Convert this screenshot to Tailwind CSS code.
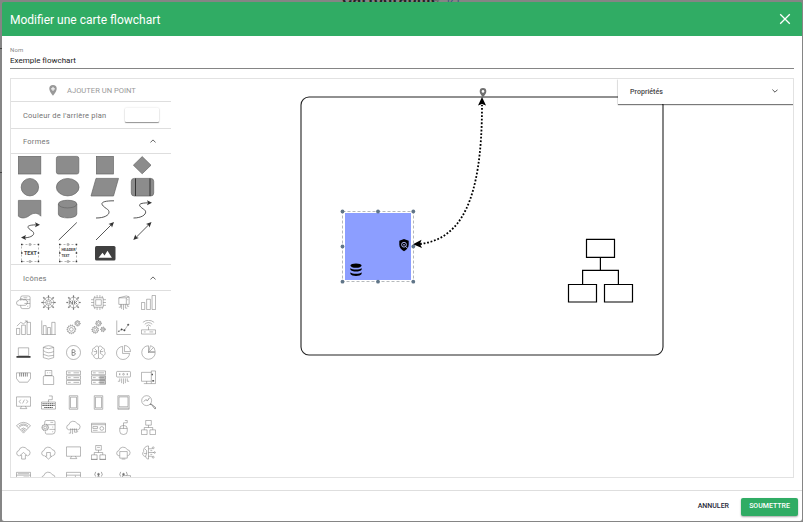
<!DOCTYPE html>
<html lang="fr">
<head>
<meta charset="utf-8">
<title>Modifier une carte flowchart</title>
<script src="https://cdn.jsdelivr.net/npm/@tailwindcss/browser@4"></script>
</head>
<body class="relative h-[522px] w-[803px] overflow-hidden bg-[#858585] font-['Roboto',sans-serif]">
<!-- page behind the dialog -->
<div class="absolute left-[342px] top-[-9px] flex items-center gap-[7px] text-[15.5px] leading-[17px] font-bold text-[#222]"><span class="tracking-[.6px]">Cartographie</span><span class="text-[11px] font-normal text-[#405580]">[Z]</span></div>
<div class="absolute left-0 top-[48px] h-px w-[2px] bg-[#444]"></div>
<div class="absolute left-0 top-[172px] h-px w-[2px] bg-[#444]"></div>

<div class="relative ml-[2px] flex h-[522px] w-[800px] flex-col pt-[2px] pb-px">
  <header class="flex h-[34px] shrink-0 items-center justify-between rounded-t-[2px] bg-[#30ac64] pl-2 pr-[11px] text-white">
    <h1 class="pt-px text-[12px] leading-4">Modifier une carte flowchart</h1>
    <svg class="size-3" viewBox="0 0 12 12" fill="none" stroke="white" stroke-width="1.3"><path d="M1.2 1.2 10.8 10.8M10.8 1.2 1.2 10.8"/></svg>
  </header>
  <main class="flex min-h-0 flex-1 flex-col bg-white px-2 pt-[10px]">
    <label class="text-[6px] leading-[8px] tracking-[.2px] text-[#888]">Nom</label>
    <div class="h-[15px] border-b border-[#858585] text-[8px] leading-[13px] text-[#222]">Exemple flowchart</div>
    <section class="relative mt-[9px] flex h-[400px] w-[784px] shrink-0 overflow-hidden border border-[#e2e2e2]">
      <aside class="flex w-[160px] shrink-0 flex-col text-[#757575]">
        <div class="flex h-[23px] shrink-0 items-center border-b border-[#dedede] pl-[38px] text-[7.6px] text-[#999]">
          <svg class="mr-[10px] h-[11px] w-2" viewBox="0 0 8 11"><path d="M4 0a3.7 3.7 0 0 0-3.7 3.8C.3 6.6 4 10.7 4 10.7s3.7-4.1 3.7-6.9A3.7 3.7 0 0 0 4 0z" fill="#999"/><path d="M4 1.900v4M2 3.900h4" stroke="#fff"/></svg>
          <span class="pt-px">AJOUTER UN POINT</span>
        </div>
        <div class="flex h-[27px] shrink-0 items-center justify-between border-b border-[#dedede] pl-3 pr-3 text-[7.5px] tracking-[.21px]">
          <span class="pt-[2px]">Couleur de l'arrière plan</span><span class="h-[14px] w-[34px] rounded-[1px] bg-white shadow-[0_1px_1px_rgba(0,0,0,.4),0_0_2px_rgba(0,0,0,.15)]"></span>
        </div>
        <div class="flex h-[25px] shrink-0 items-center justify-between border-b border-[#dedede] pl-3 pr-[15px] text-[7.5px] tracking-[.25px]">
          <span class="pt-[2px]">Formes</span><svg class="h-[4px] w-[6px]" viewBox="0 0 6 4" fill="none" stroke="#666"><path d="M.4 3.5 3 .9l2.6 2.6"/></svg>
        </div>
        <div id="shapes" class="grid h-[111px] shrink-0 grid-cols-[repeat(4,37.5px)] grid-rows-[repeat(5,22px)] border-b border-[#dedede]"></div>
        <div class="flex h-[26px] shrink-0 items-center justify-between border-b border-[#dedede] pl-3 pr-[15px] text-[7.5px] tracking-[.25px]">
          <span class="pt-[2px]">Icônes</span><svg class="h-[4px] w-[6px]" viewBox="0 0 6 4" fill="none" stroke="#666"><path d="M.4 3.5 3 .9l2.6 2.6"/></svg>
        </div>
        <div id="icons" class="grid shrink-0 grid-cols-[repeat(6,25px)] auto-rows-[25px]"></div>
      </aside>
      <!-- drawing canvas -->
      <svg class="h-[398px] w-[622px] shrink-0" viewBox="171 79 622 398" fill="none">
        <rect x="301" y="97" width="362" height="258" rx="8" stroke="#222" stroke-width="1.1"/>
        <path d="M483 88a3.300 3.300 0 0 0-3.300 3.400c0 2.300 3.300 5.800 3.300 5.800s3.300-3.500 3.300-5.800a3.300 3.300 0 0 0-3.300-3.400z" fill="#707070"/><circle cx="483" cy="91.4" r="1.300" fill="#fff"/>
        <rect x="345" y="213" width="66" height="67" fill="#8c9eff"/>
        <rect x="342.5" y="211.5" width="71" height="70" stroke="#b5b9bc" stroke-dasharray="3 2"/>
        <g fill="#000" transform="translate(350 263)"><ellipse cx="6" cy="2.6" rx="5.6" ry="2.2"/><path d="M.4 5c1.800 2 9.400 2 11.200 0v1.800c-1.200 2.400-10 2.400-11.200 0zM.4 9.200c1.800 2 9.400 2 11.200 0V11c-1.200 2.500-10 2.500-11.200 0z"/></g>
        <path d="m404 239 4.700 1.700v3.800c0 3.200-2 5.400-4.700 6.700-2.700-1.300-4.700-3.500-4.700-6.700v-3.800z" fill="#000"/><circle cx="404" cy="244.7" r="2.4" stroke="#b7c2ff" stroke-width=".9"/><circle cx="404" cy="244.7" r=".8" fill="#b7c2ff"/><path d="m405.700 246.400 2 2.100" stroke="#b7c2ff" stroke-width=".9"/>
        <g fill="#607588"><circle cx="342.5" cy="211.5" r="1.9"/><circle cx="378" cy="211.5" r="1.9"/><circle cx="413.3" cy="211.5" r="1.9"/><circle cx="342.5" cy="246.5" r="1.9"/><circle cx="413.3" cy="246.5" r="1.9"/><circle cx="342.5" cy="281.7" r="1.9"/><circle cx="378" cy="281.7" r="1.9"/><circle cx="413.3" cy="281.7" r="1.9"/></g>
        <path d="M420 244C460 239 482 203 482 105" stroke="#000" stroke-width="1.8" stroke-dasharray="1.8 1.8"/>
        <path d="m482 97 4 8.5-4-1.500-4 1.500zM413 244.300l8.500-4.500-1.500 4.300 2 3.800z" fill="#000"/>
        <g stroke="#000" stroke-width="1.2"><path d="M586.5 239.300h28v18h-28zM568.5 284.500h28V302h-28zM604.5 284.500h28V302h-28zM600.4 257.300v13M582.6 284.500v-14.200h35.800v14.200"/></g>
      </svg>
      <div class="absolute right-0 top-0 flex h-[25px] w-[175px] items-center justify-between bg-white pl-3 pr-[15px] text-[7.1px] font-medium text-[#484848] shadow-[0_1px_1px_rgba(0,0,0,.5),0_0_2px_rgba(0,0,0,.15)]"><span class="pt-px">Propriétés</span><svg class="mb-px h-[4px] w-[6px]" viewBox="0 0 6 4" fill="none" stroke="#555"><path d="M.4.6 3 3.200 5.600.6"/></svg></div>
    </section>
  </main>
  <footer class="flex h-[31px] shrink-0 items-center justify-end gap-[12px] rounded-b-[2px] border-t border-[#dedede] bg-white pr-[4px] text-[7px] font-medium">
    <button class="pt-px text-[#1f2937]">ANNULER</button>
    <button class="mt-px h-[18px] w-[57px] rounded-[2px] bg-[#30ac64] text-white shadow-[0_1px_2px_rgba(0,0,0,.35)]">SOUMETTRE</button>
  </footer>
</div>

<script>
const fillShape = 'fill="#8c8c8c" stroke="#666" stroke-width=".7"';
const line = 'fill="none" stroke="#444" stroke-width=".9"';
const text = 'fill="#444" font-family="Roboto" font-weight="bold"';
const image = '<rect x="8.500" y="4" width="20.500" height="14.500" rx="1.500" fill="#404040"/><path d="m12 15.800 4-5 2 2.600 3-4.600 4.400 7z" fill="#fff"/>';
const box = '<path d="M10.500 2.500h17v17h-17z" fill="none" stroke="#999" stroke-width=".7" stroke-dasharray="2 2"/><g fill="#333"><path d="M10 1.800h1.500v1.500H10zM26.700 1.800h1.500v1.500h-1.500zM10 18.700h1.500v1.500H10zM26.700 18.700h1.500v1.500h-1.500zM10 10.200h1.500v1.500H10zM26.700 10.200h1.500v1.500h-1.500z"/></g><path d="M18.200 1.700h1.600v1.600h-1.600zM18.200 18.700h1.600v1.600h-1.600z" fill="#fff" stroke="#777" stroke-width=".6"/>';
const shapes = [
 `<rect x="7.400" y="2.400" width="22.400" height="17.600" ${fillShape}/>`,
 `<rect x="7.400" y="2.400" width="22.400" height="17.600" rx="2" ${fillShape}/>`,
 `<rect x="10.400" y="2.400" width="17" height="17.600" ${fillShape}/>`,
 `<path d="m18.200 2.600 8.800 8.600-8.800 8.600-8.800-8.600z" ${fillShape}/>`,
 `<circle cx="18.900" cy="11.200" r="8.700" ${fillShape}/>`,
 `<ellipse cx="18.700" cy="11.200" rx="11.300" ry="8.700" ${fillShape}/>`,
 `<path d="M10 2.400h22.500L27.500 20H5z" ${fillShape}/>`,
 `<rect x="7.300" y="2.400" width="22.400" height="17.600" rx="3" ${fillShape}/><path d="M11.500 2.400V20M26 2.400V20" stroke="#333"/>`,
 `<path d="M7.400 2.400h22.400v15.800c-3-4-8-3.400-11.200-.8-3.500 2.800-8 3.600-11.200.8z" ${fillShape}/>`,
 `<path d="M9.400 6v10c0 5.200 18.400 5.200 18.400 0V6c0-5-18.400-5-18.400 0zc0 5.200 18.400 5.200 18.400 0" ${fillShape}/>`,
 `<path d="M28 2.800c-18 0-12 5-6.500 8.500 4 3.500 0 8.700-11.500 8.700" ${line}/>`,
 `<path d="M26 4.800c-16 0-10 4-5.500 7 3.500 3-1 8.200-11 8.200" ${line}/><path d="m28 4.800-5-2.500 1 2.500-1 2.500z" fill="#333"/>`,
 `<path d="M27 4.800c-15 0-10 3.500-5.500 6.500 3.500 3-1 6.500-8.500 6.500" ${line}/><path d="m29 4.800-5-2.500 1 2.500-1 2.500zM10 17.600l5-2.500-1 2.500 1 2.500z" fill="#333"/>`,
 `<path d="M9.800 20 27.800 2.500" ${line}/>`,
 `<path d="M10 20 27 3" ${line}/><path d="m28 2-5.500 2 2.500 1 1 2.500z" fill="#333"/>`,
 `<path d="m10.500 19 16-16" ${line}/><path d="m27.500 2-5.500 2 2.500 1 1 2.500zM9.300 20l2-5.500 1 2.500 2.500 1z" fill="#333"/>`,
 box + `<text x="12.900" y="13" font-size="5.300" ${text}>TEXT</text>`,
 box + `<text x="12.500" y="9.200" font-size="3.700" ${text}>HEADER</text><text x="12.500" y="14.700" font-size="3.300" ${text}>TEXT</text>`,
 `<g transform="translate(.5 0)">${image}</g>`
];
document.getElementById('shapes').innerHTML = shapes.map(s => `<svg class="h-[22px] w-[37.5px]" viewBox="0 0 37.5 22">${s}</svg>`).join('');

const cloud = '<path d="M4 11.500H3a2.800 2.800 0 0 1 0-5.500 4.800 4.800 0 0 1 9-1 3.300 3.300 0 0 1 .5 6.500H12"/>';
const monitor = '<path d="M.5 2h15v10H.5zM6 12l-1.500 2.500h7L10 12"/>';
const net = '<path d="M5 .5h6v5H5zM.5 10.500h6v5h-6zM9.500 10.500h6v5h-6zM8 5.500V8M3.500 10.500V8h9v2.500"/>';
const gear = (x, y, r) => `<circle cx="${x}" cy="${y}" r="${r}"/><circle cx="${x}" cy="${y}" r="${r * .5}"/><circle cx="${x}" cy="${y}" r="${r + .6}" stroke-dasharray="1 1.2" stroke-width=".8"/>`;
const hub = '<circle cx="8" cy="8" r="5.500"/><path d="M8 1v14M1 8h14M3 3l10 10M13 3 3 13"/><g fill="#777"><circle cx="8" cy="1.200" r=".6"/><circle cx="8" cy="14.800" r=".6"/><circle cx="1.200" cy="8" r=".6"/><circle cx="14.800" cy="8" r=".6"/><circle cx="3" cy="3" r=".6"/><circle cx="13" cy="13" r=".6"/><circle cx="3" cy="13" r=".6"/><circle cx="13" cy="3" r=".6"/></g>';
const db = '<path d="M2.500 2.500q5.500-3.500 11 0v11q-5.500 3-11 0zM2.500 2.500q5.500 3 11 0M2.500 6q5 4 11 1M2.500 10q5 3 11 1"/>';
const server = '<path d="M.5 1h15v4H.5zM.5 6.200h15v3.800H.5zM.5 11.200h15v4H.5z"/><path d="M2 3h3M8 3h6M2 8.100h3M8 8.100h6M2 13.200h3M8 13.200h6"/>';
const wires = '<path d="M4 9v3H2M6 9v5M8 9v6M10 9v5M12 9v3h2"/>';
const brain = '<path d="M8 2C6 0 4 2 4 3 2 3 1 5 2 6.500 0 8 1 11 3 11.500 3 14 6 15.500 8 14zM8 2c2-2 4 0 4 1 2 0 3 2 2 3.500 2 1.500 1 4.500-1 5 0 2.500-3 4-5 2.500M4 4l2 2v3l-3 2M12 4l-2 2v3l3 2M3 7h3M10 7h3"/>';
const antenna = '<path d="m8 5-3 11M8 5l3 11M6 11h4M5 2q-2 3 0 5M11 2q2 3 0 5" stroke="#444"/><circle cx="8" cy="4.500" r="1" fill="#777"/>';
const icons = [
 '<path d="M5 6V2.500Q5 1 7 1h6q2 0 2 1.500v10q0 2-2 2H7q-2 0-2-2V11M5 5h10M9 9h6M3 11a2.500 2.500 0 0 1 0-5 3 3 0 0 1 5-1 3 3 0 0 1 2 6zM8 3h4M12 7h1M12 12h1"/>',
 hub + '<circle cx="8" cy="8" r="3" fill="white"/><circle cx="8" cy="8" r="1.500"/>',
 hub + '<path d="M2.500 5.800h11v4.400h-11z" fill="white" stroke="none"/><path d="M4 10V6l3 4V6M9 6v4M12 6l-2 2 2 2" stroke-width=".9"/>',
 '<path d="M3 3h10v10H3zM5 5h6v6H5zM4 1v2M6.500 0v3M9.500 0v3M12 1v2M4 13v2M6.500 13v3M9.500 13v3M12 13v2M0 5h3M0 8h3M0 11h3M13 5h3M13 8h3M13 11h3"/>',
 '<path d="M3 3 11 1l3 1v8H3zM3 3h8v7M11 3l3-1M12 5h1M5 10v3H3M8 10v6M10 10v4h2M6 10v5M12 10v2h2"/>',
 '<path d="M.5 8h3.500v7.500H.5zM6 4.500h4v11H6zM11.800 .5h3.700v15h-3.700z"/>',
 '<path d="M.5 9h3.500v6.500H.5zM6 5.500h4v10H6zM11.800 2.500h3.700v13h-3.700zM1 6.500l4-4 3 1.500 4-3M9.500 1H12v2"/>',
 '<path d="M.8.5v15h15M2.500 6h3v9.500M2.500 6v9.500M7 8h3v7.500M7 8v7.500M11.500 15.500V2.500h3.500v13"/>',
 gear(5.700,10,4)+gear(12.300,3.500,2.300), gear(4.500,10.500,3)+gear(8,3.500,2.400)+gear(12.700,10,1.900),
 '<path d="M.8.5v15h15M3 12l3-2 3 1 4-6"/><g fill="#333"><circle cx="3" cy="12" r=".5"/><circle cx="6" cy="10" r=".8"/><circle cx="9" cy="11" r=".8"/><circle cx="13" cy="5" r=".8"/></g>',
 '<path d="M.5 10.500h15v4.500H.5zM8 10.500V7M2 2.500q6-4.500 12 0M4 4.500q4-3.500 8 0M5.500 6.500q2.500-2.500 5 0M3 12.700h2M9 12.700h4"/>',
 '<path d="M2.500 3h11v8.500h-11z"/><path d="M.5 12.700h15" stroke="#333" stroke-width="1.800"/>', db,
 '<circle cx="8" cy="8" r="7.500"/><path d="M6.500 5v6h2q3-1 .5-3 2-2-.5-3zm0 3h2" stroke-width=".8"/>', brain,
 '<path d="M7 1.500a7 7 0 1 0 7.500 7.500H7zM9 .5V7h6.500A6.500 6.500 0 0 0 9 .5z"/>',
 '<path d="M8 .8A7.200 7.200 0 1 0 15.200 8H8zM8 8l5-5M8 8l2-7M10 .5l4 2.500 1.200 4H9"/>',
 '<path d="M.5 3h15v6l-3 4h-9L.5 9z"/><path d="M4 3v4M6 3v4M8 3v4M10 3v4M12 3v4" stroke-width=".8"/>',
 '<path d="M4.500.5h7V6h-7zM2.500 7.500q0-1.500 2-1.500h7q2 0 2 1.500v8h-11zM7 2.500v1M9.500 2.500v1"/>', server,
 '<path d="M9 6.200h6.500v9H9z" fill="#c8c8c8" stroke="none"/>' + server,
 '<rect x=".5" y="1.500" width="15" height="6" rx="1"/><circle cx="8" cy="4.500" r=".9"/><path d="M4 3.500v2M12 3.500v2" stroke-width=".8"/>'+wires,
 '<path d="M11 12H.5V2.500H11M3 14.500h8M6 12v2.500M11 1h4.500v13.500H11z"/><path d="M12 4v1.500M12 11.500h2" stroke="#333" stroke-width="1.300"/>',
 monitor+'<path d="M5 5 3.500 7 5 9M11 5l1.500 2L11 9M9 5 7 9"/>',
 '<path d="M.5 7.500h15V15H.5zM8 7.500V5h4V1H8.500"/><path d="M1.500 9.300h13M1.500 11.300h13M3.500 13.300h9" stroke="#555" stroke-width="1.100" stroke-dasharray="1.500 .5"/>',
 '<path d="M3.500.8h9v14.400h-9zM4.800 2.300h6.400v11.400H4.800z"/>',
 '<path d="M3.500.8h9v14.400h-9zM4.800 2.300h6.400v11.400H4.800z"/>',
 '<path d="M2 .8h12v14.400H2zM3.200 2h9.600v10.500H3.200z"/><path d="M2 14h12"/>',
 '<circle cx="6" cy="6" r="5.300"/><path d="m9.500 10 1.500 0 4 5 1-1.300-5-4zM3 7l2-2 2 1 2-3" stroke-width=".7"/>',
 '<path d="M.5 6q7.500-7 15 0M3 8q5-5 10 0M5 10q3-3 6 0M.5 6 8 14l7.500-8M3 6.500q5-4.500 10 0"/><circle cx="8" cy="11" r="1"/>',
 '<path d="M4 4V2q0-1.500 2-1.500h7q2 0 2 1.500v10q0 3-3 3H6q-1.500 0-1.500-2.500M6 5h9M9 10h6M10 2.500h3M12 7.500h1M12 12.500h1"/>'+gear(4.500,8,3),
 '<g transform="translate(0 -1)">'+cloud+'</g><path d="M5 9v5H3M7 9v6M9 9v4h3M11 9v3h2M4 10h8"/>',
 '<path d="M.5 3.500h15V13H.5zM.5 5h15M2 7h5v2H2zM2 11h5"/><circle cx="11.500" cy="9" r="2"/>',
 '<path d="M4 9q0-3.200 4-3.200T12 9v3q0 3.500-4 3.500T4 12zM4 9h8M8 5.800V3h4V.5H9.500M8 5.800V9"/>', net,
 cloud+'<path d="M6 15v-4H4.500L8 8l3.500 3H10v4z" fill="white"/>', cloud+'<path d="M6 8v4H4.500L8 15l3.500-3H10V8z" fill="white"/>', monitor,
 net+'<path d="M0 15.200h7M9 15.200h7M6.500 2.500h3"/>', cloud+'<path d="M4 7h8v7H4zM6 15h4" fill="white"/>',
 '<path d="M8 1C4 1 2 5 3 7 0 9 3 13 5 12c0 3 3 3 3 3V1M4 4l2 2v3H3M5 12l1-3M8 4h4M8 8h6M8 12h4M10 6h2M10 10h2"/><circle cx="13" cy="3" r="1"/><circle cx="14.500" cy="8" r=".8"/><circle cx="13" cy="13" r="1"/>',
 '<path d="M.5 2.500h15v12H.5zM.5 5.500h15M2 4h12M8 7.500h6"/>', cloud, '<path d="M.5 2.500h15v12H.5zM.5 5.500h15M10 6v3"/>', antenna, antenna+'<path d="M7 6h8.500v8H7z" fill="white"/>'
];
document.getElementById('icons').innerHTML = icons.map(s => `<svg class="mt-[4px] ml-[5px] size-[15px]" viewBox="0 0 16 16" fill="none" stroke="#686868" stroke-width=".5">${s}</svg>`).join('');
</script>
</body>
</html>
